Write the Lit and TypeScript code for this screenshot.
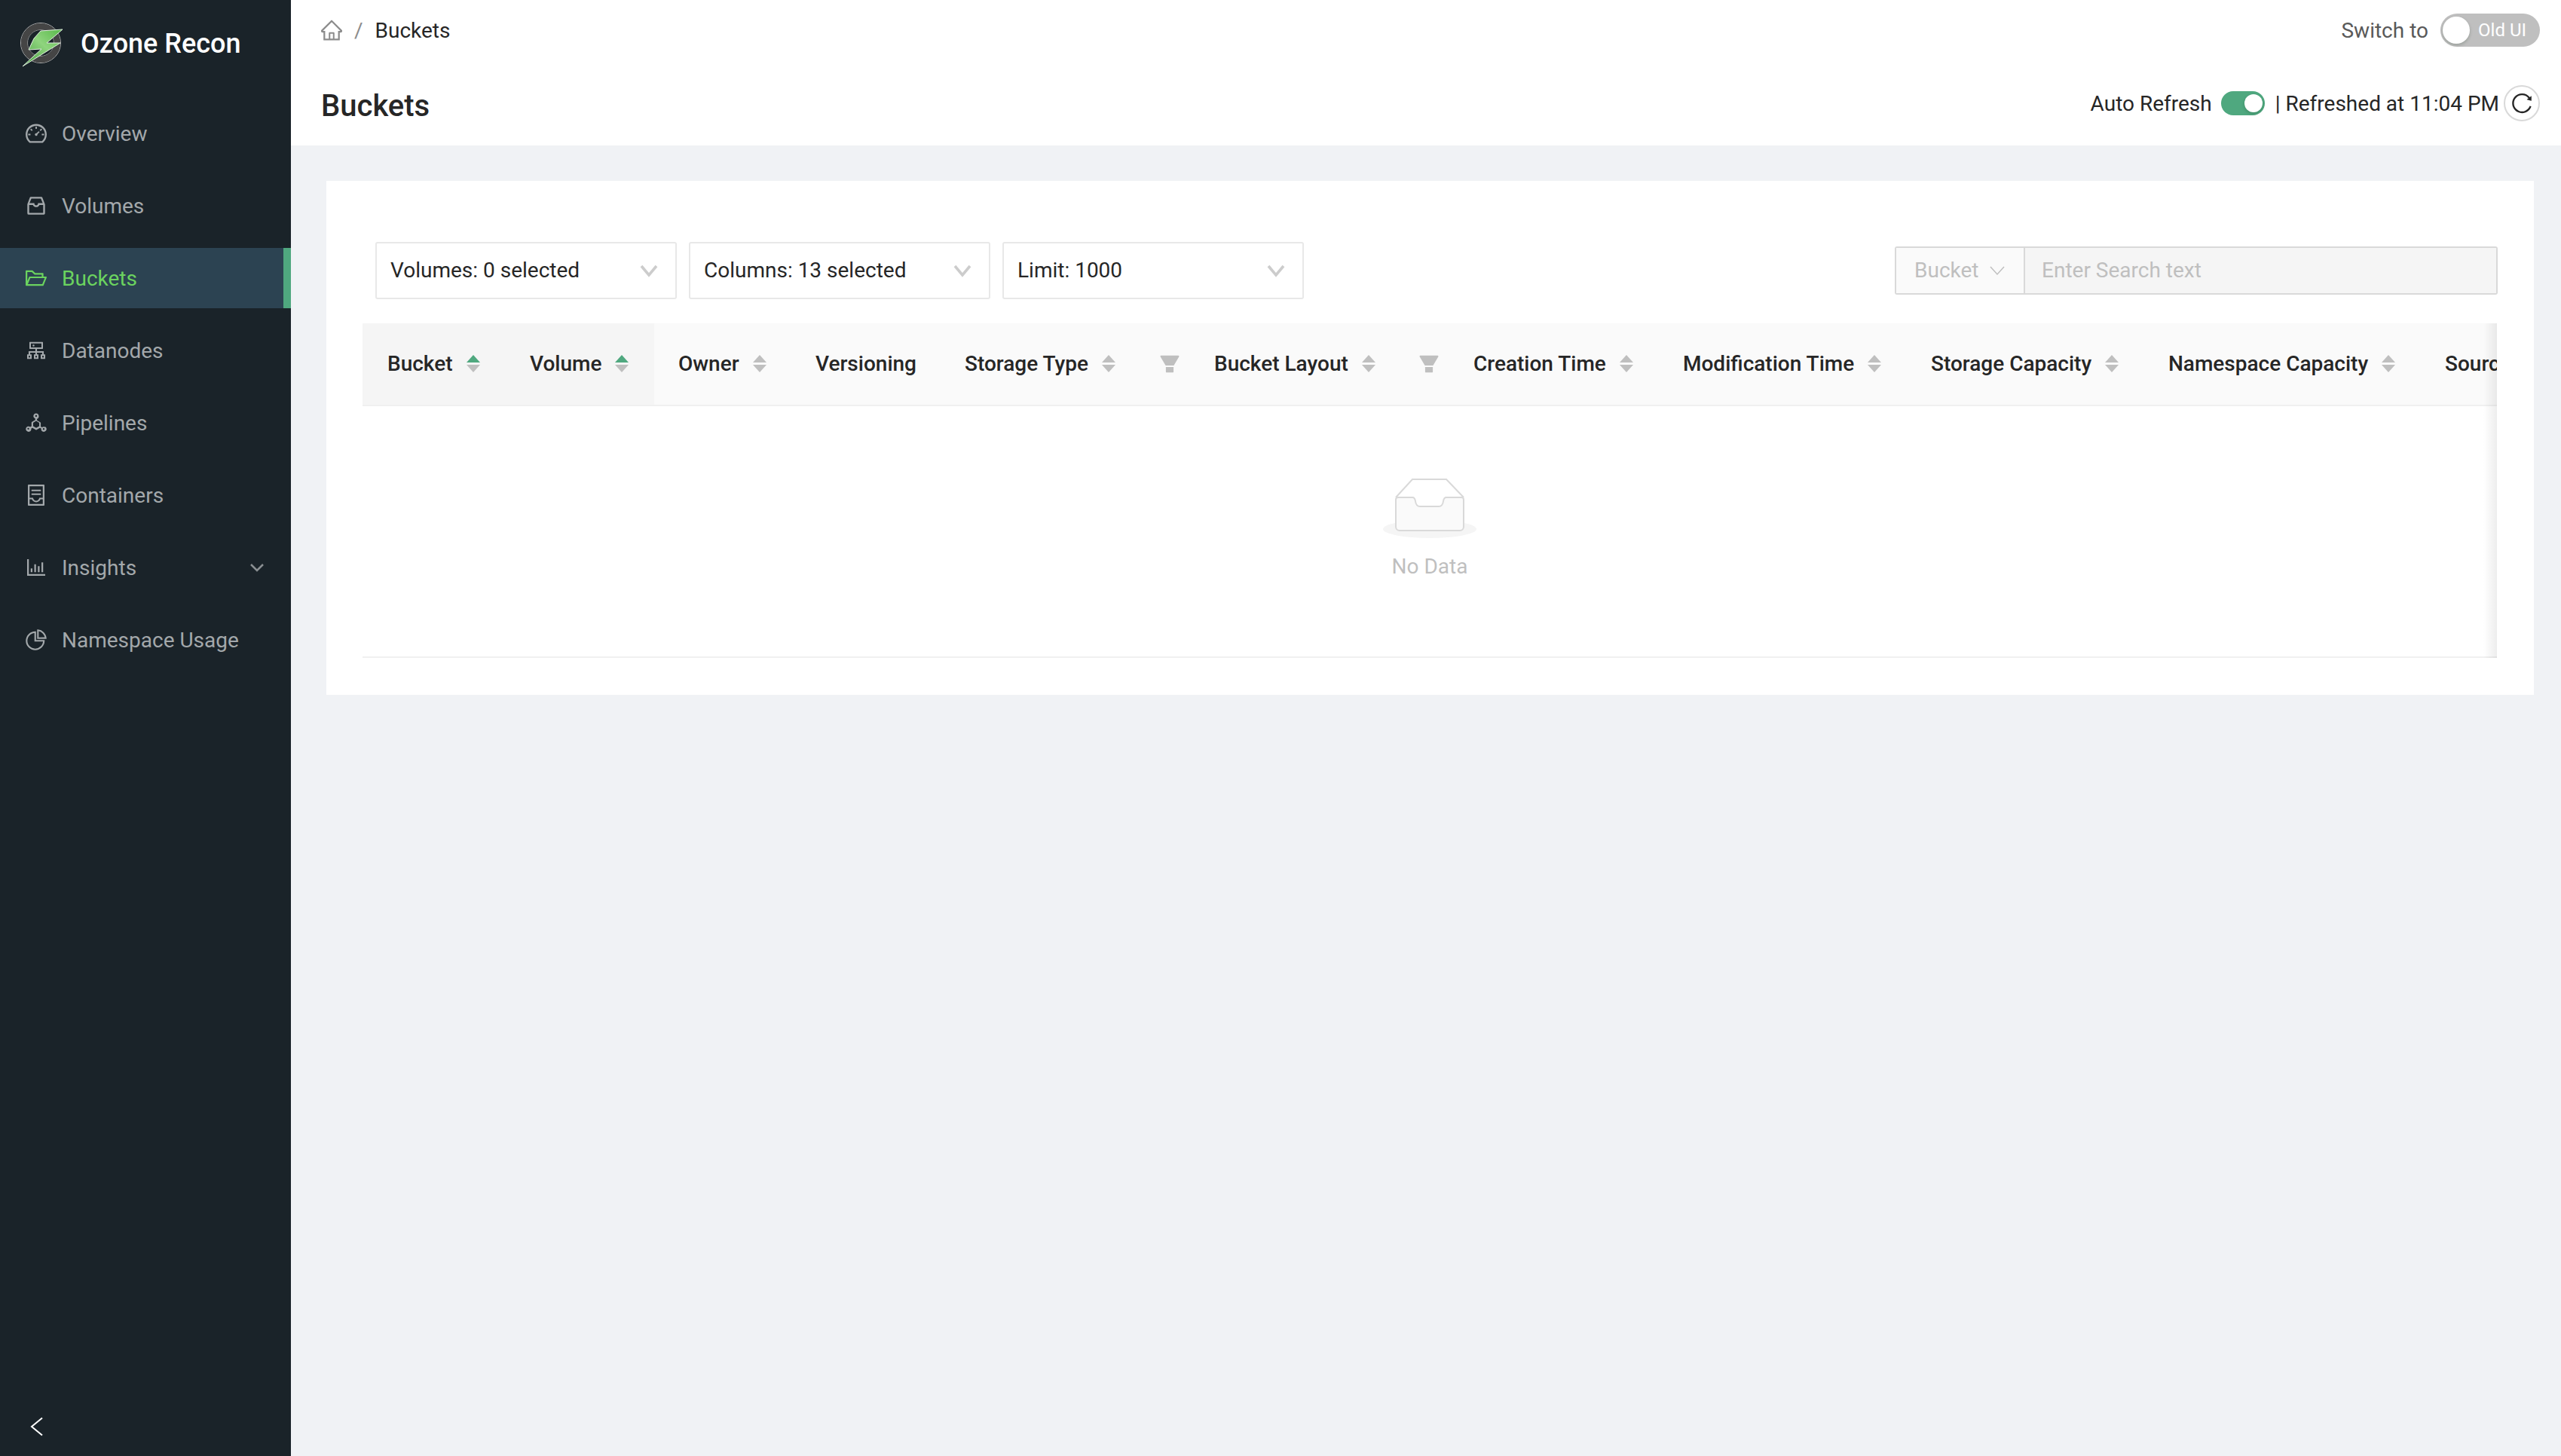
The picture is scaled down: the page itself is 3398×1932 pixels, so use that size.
import { LitElement, html, css, svg } from "lit";
import { customElement } from "lit/decorators.js";

const A = "64 64 896 896";
const ic = (d: string) => html`<svg class="ic" viewBox=${A} fill="currentColor"><path d=${d}></path></svg>`;

const P = {
  dashboard: "M924.800 385.600a446.700 446.700 0 0 0-96-142.400 446.700 446.700 0 0 0-142.400-96C631.100 123.800 572.500 112 512 112s-119.100 11.800-174.400 35.200a446.700 446.700 0 0 0-142.400 96 446.700 446.700 0 0 0-96 142.400C75.800 440.900 64 499.500 64 560c0 132.700 58.300 257.700 159.900 343.100l1.700 1.400c5.800 4.800 13.100 7.500 20.600 7.500h531.700c7.500 0 14.800-2.700 20.600-7.500l1.700-1.400C901.700 817.700 960 692.700 960 560c0-60.500-11.900-119.100-35.200-174.400zM761.400 836H262.600A371.120 371.120 0 0 1 140 560c0-99.400 38.700-192.800 109-263 70.300-70.300 163.700-109 263-109 99.400 0 192.800 38.700 263 109 70.300 70.300 109 163.700 109 263 0 105.600-44.500 205.500-122.600 276zM623.500 421.500a8.030 8.030 0 0 0-11.300 0L527.700 506c-18.700-5-39.400-.2-54.100 14.500a55.950 55.950 0 0 0 0 79.200 55.950 55.950 0 0 0 79.200 0 55.870 55.870 0 0 0 14.500-54.100l84.500-84.500c3.100-3.100 3.100-8.200 0-11.300l-28.300-28.300zM490 320h44c4.400 0 8-3.600 8-8v-80c0-4.400-3.600-8-8-8h-44c-4.400 0-8 3.600-8 8v80c0 4.400 3.600 8 8 8zm260 218v44c0 4.400 3.600 8 8 8h80c4.400 0 8-3.600 8-8v-44c0-4.400-3.600-8-8-8h-80c-4.400 0-8 3.600-8 8zm12.700-197.200l-31.100-31.100a8.030 8.030 0 0 0-11.300 0l-56.600 56.600a8.030 8.030 0 0 0 0 11.300l31.100 31.100c3.100 3.100 8.200 3.100 11.300 0l56.600-56.600c3.100-3.100 3.100-8.200 0-11.300zm-458.600-31.100a8.030 8.030 0 0 0-11.300 0l-31.100 31.100a8.030 8.030 0 0 0 0 11.300l56.600 56.600c3.100 3.100 8.200 3.100 11.300 0l31.100-31.100c3.100-3.100 3.100-8.200 0-11.300l-56.600-56.600zM262 530h-80c-4.400 0-8 3.600-8 8v44c0 4.400 3.600 8 8 8h80c4.400 0 8-3.600 8-8v-44c0-4.400-3.600-8-8-8z",
  inbox: "M885.200 446.300l-.2-.8-112.200-285.100c-5-16.100-19.900-27.200-36.800-27.200H281.200c-17 0-32.100 11.300-36.900 27.600L139.400 443l-.3.700-.2.800c-1.300 4.900-1.700 9.900-1 14.800-.1 1.600-.2 3.200-.2 4.800V830a60.900 60.900 0 0 0 60.800 60.800h627.200c33.500 0 60.800-27.300 60.900-60.800V464.100c0-1.300 0-2.600-.1-3.700.4-4.900 0-9.600-1.300-14.100zm-295.800-43l-.3 15.700c-.8 44.900-31.800 75.100-77.100 75.100-22.100 0-41.100-7.100-54.800-20.600S436 441.200 435.600 419l-.3-15.700H229.500L309 210h399.200l81.700 193.300H589.400zm-375 76.800h157.300c24.300 57.100 76 90.800 140.400 90.800 33.700 0 65-9.400 90.300-27.200 22.200-15.600 39.500-37.400 50.700-63.600h156.500V814H214.400V480.100z",
  folder: "M928 444H820V330.400c0-17.700-14.300-32-32-32H473L355.700 186.200a8.150 8.150 0 0 0-5.500-2.200H96c-17.700 0-32 14.300-32 32v592c0 17.700 14.300 32 32 32h698c13 0 24.800-7.900 29.700-20l134-332c1.500-3.800 2.300-7.900 2.300-12 0-17.700-14.300-32-32-32zM136 256h188.500l119.600 114.400H748V444H238c-13 0-24.800 7.900-29.700 20L136 643.200V256zm635.300 512H159l103.300-256h612.400L771.300 768z",
  cluster: "M888 680h-54V540H546v-92h238c8.800 0 16-7.200 16-16V168c0-8.800-7.200-16-16-16H240c-8.800 0-16 7.200-16 16v264c0 8.800 7.200 16 16 16h238v92H190v140h-54c-4.400 0-8 3.600-8 8v176c0 4.400 3.600 8 8 8h176c4.400 0 8-3.600 8-8V688c0-4.400-3.600-8-8-8h-54v-72h220v72h-54c-4.400 0-8 3.600-8 8v176c0 4.400 3.600 8 8 8h176c4.400 0 8-3.600 8-8V688c0-4.400-3.600-8-8-8h-54v-72h220v72h-54c-4.400 0-8 3.600-8 8v176c0 4.400 3.600 8 8 8h176c4.400 0 8-3.600 8-8V688c0-4.400-3.600-8-8-8zM256 805.300c0 1.500-1.200 2.700-2.700 2.700h-58.700c-1.500 0-2.700-1.200-2.700-2.700v-58.700c0-1.500 1.200-2.700 2.700-2.700h58.700c1.500 0 2.700 1.200 2.700 2.700v58.700zm288 0c0 1.500-1.200 2.700-2.700 2.700h-58.700c-1.500 0-2.700-1.200-2.700-2.700v-58.700c0-1.500 1.200-2.700 2.700-2.700h58.700c1.500 0 2.700 1.200 2.700 2.700v58.700zM288 384V216h448v168H288zm544 421.300c0 1.500-1.200 2.700-2.700 2.700h-58.700c-1.500 0-2.700-1.200-2.700-2.700v-58.700c0-1.500 1.200-2.700 2.700-2.700h58.700c1.500 0 2.700 1.200 2.700 2.700v58.700zM360 300a40 40 0 1 0 80 0 40 40 0 1 0-80 0z",
  deploy: "M888.300 693.200c-42.500-24.600-94.300-18-129.200 12.800l-53-30.700V523.600c0-15.700-8.400-30.300-22-38.100l-136.900-79.100v-61.100c45.400-14.800 78.400-57.500 78.400-108C626 159.900 574 108 510 108s-116 51.900-116 116c0 50.500 32.900 93.200 78.400 108v60.800L335.300 470c-13.600 7.800-22 22.400-22 38.100v151.700L260.200 690c-34.800-30.800-86.500-37.300-129-12.800-55.500 32-74.500 103-42.400 158.500 32.100 55.500 103 74.500 158.500 42.400 42.500-24.500 62.300-72.700 52.600-118.200L353 729l136.800 79c6.800 3.900 14.300 5.900 21.900 5.900 7.500 0 15.100-2 21.900-5.900L672.700 729l53.100 30.700c-9.700 45.600 10 93.800 52.600 118.200 55.500 32 126.400 13 158.500-42.400 31.800-55.500 12.800-126.400-42.600-158.300zM158 795.600c-17.500-10-23.500-32.500-13.400-50 10-17.500 32.500-23.500 50-13.400 17.500 10 23.500 32.500 13.400 50-10 17.500-32.500 23.500-50 13.400zM471 224c0-21.500 17.500-39 39-39s39 17.500 39 39-17.500 39-39 39-39-17.500-39-39zm169.700 432.900L512 731.200 383.300 656.900V508.300L512 434l128.700 74.300v148.600zm221.800 137.200c-10.100 17.500-32.500 23.500-50 13.400-17.500-10-23.500-32.500-13.400-50 10-17.500 32.500-23.500 50-13.400 17.500 10 23.500 32.400 13.400 50z",
  container: "M832 64H192c-17.700 0-32 14.300-32 32v832c0 17.700 14.300 32 32 32h640c17.700 0 32-14.300 32-32V96c0-17.700-14.300-32-32-32zm-40 824H232V687h97.900c11.600 32.800 32 62.300 59.100 84.700 34.500 28.500 78.200 44.300 123 44.300s88.500-15.700 123-44.300c27.100-22.400 47.500-51.900 59.100-84.700H792v201zm0-264H643.600l-5.200 24.700C626.400 708.500 573.200 752 512 752s-114.400-43.500-126.500-103.300l-5.200-24.700H232V136h560v488zM320 341h384c4.400 0 8-3.600 8-8v-48c0-4.400-3.600-8-8-8H320c-4.400 0-8 3.600-8 8v48c0 4.400 3.600 8 8 8zm0 160h384c4.400 0 8-3.600 8-8v-48c0-4.400-3.600-8-8-8H320c-4.400 0-8 3.600-8 8v48c0 4.400 3.600 8 8 8z",
  bar: "M888 792H200V168c0-4.400-3.600-8-8-8h-56c-4.400 0-8 3.600-8 8v688c0 4.400 3.600 8 8 8h752c4.400 0 8-3.600 8-8v-56c0-4.400-3.600-8-8-8zm-600-80h56c4.400 0 8-3.600 8-8V560c0-4.400-3.600-8-8-8h-56c-4.400 0-8 3.600-8 8v144c0 4.400 3.600 8 8 8zm152 0h56c4.400 0 8-3.600 8-8V384c0-4.400-3.600-8-8-8h-56c-4.400 0-8 3.600-8 8v320c0 4.400 3.600 8 8 8zm152 0h56c4.400 0 8-3.600 8-8V462c0-4.400-3.600-8-8-8h-56c-4.400 0-8 3.600-8 8v242c0 4.400 3.600 8 8 8zm152 0h56c4.400 0 8-3.600 8-8V304c0-4.400-3.600-8-8-8h-56c-4.400 0-8 3.600-8 8v400c0 4.400 3.600 8 8 8z",
  pie: "M864 518H506V160c0-4.400-3.600-8-8-8h-26a398.460 398.460 0 0 0-282.800 117.100 398.190 398.190 0 0 0-85.700 127.100A397.610 397.610 0 0 0 72 552a398.460 398.460 0 0 0 117.100 282.800c36.700 36.700 79.500 65.600 127.100 85.700A397.610 397.610 0 0 0 472 952a398.460 398.460 0 0 0 282.800-117.100c36.700-36.700 65.600-79.500 85.700-127.100A397.610 397.610 0 0 0 872 552v-26c0-4.400-3.600-8-8-8zM705.700 787.800A331.590 331.590 0 0 1 470.400 884c-88.100-.4-170.900-34.900-233.200-97.200C174.500 724.100 140 640.700 140 552c0-88.700 34.500-172.100 97.200-234.800 54.600-54.600 124.900-87.900 200.800-95.500V586h364.300c-7.700 76.300-41.300 147-96.600 201.800zM952 462.400l-2.600-28.200c-8.500-92.100-49.400-179-115.200-244.600A399.400 399.400 0 0 0 589 74.600L560.700 72c-4.700-.4-8.700 3.200-8.700 7.900V464c0 4.400 3.600 8 8 8l384-1c4.700 0 8.400-4 8-8.600zm-332.200-58.200V147.600a332.240 332.240 0 0 1 166.400 89.800c45.700 45.600 77 103.600 90 166.100l-256.400.7z",
  home: "M946.500 505L560.100 118.800l-25.900-25.900a31.500 31.500 0 0 0-44.400 0L77.500 505a63.900 63.900 0 0 0-18.800 46c.4 35.200 29.700 63.300 64.900 63.300h42.500V940h691.800V614.300h43.400c17.100 0 33.200-6.700 45.300-18.800a63.600 63.600 0 0 0 18.700-45.300c0-17-6.700-33.100-18.800-45.200zM568 868H456V664h112v204zm217.900-325.700V868H632V640c0-22.100-17.900-40-40-40H432c-22.100 0-40 17.900-40 40v228H238.100V542.300h-96l370-369.700 23.100 23.100L882 542.300h-96.100z",
  reload: "M909.100 209.300l-56.400 44.100C775.800 155.100 656.200 92 521.900 92 290 92 102.300 279.500 102 511.500 101.700 743.700 289.800 932 521.900 932c181.300 0 335.800-115 394.600-276.100 1.500-4.200-.7-8.900-4.900-10.300l-56.700-19.500a8 8 0 0 0-10.100 4.800c-1.800 5-3.800 10-5.900 14.900-17.300 41-42.100 77.800-73.700 109.400A344.770 344.770 0 0 1 655.900 829c-42.300 17.900-87.400 27-133.800 27-46.500 0-91.500-9.100-133.800-27A341.500 341.500 0 0 1 279 755.200a342.160 342.160 0 0 1-73.700-109.400c-17.900-42.400-27-87.400-27-133.900s9.100-91.500 27-133.900c17.300-41 42.100-77.800 73.700-109.400 31.600-31.600 68.400-56.400 109.300-73.800 42.300-17.900 87.400-27 133.800-27 46.500 0 91.500 9.100 133.800 27a341.500 341.500 0 0 1 109.300 73.800c9.900 9.900 19.200 20.400 27.800 31.400l-60.200 47a8 8 0 0 0 3 14.100l175.600 43c5 1.200 9.900-2.600 9.900-7.700l.8-180.900c-.1-6.600-7.800-10.300-13-6.200z",
  filter: "M349 838c0 17.700 14.200 32 31.800 32h262.400c17.600 0 31.800-14.300 31.800-32V642H349v196zm531.100-684H143.900c-24.500 0-39.800 26.700-27.500 48l221.300 376h348.800l221.300-376c12.100-21.300-3.200-48-27.700-48z",
};

const navItems: { label: string; icon: string; active?: boolean; caret?: boolean }[] = [
  { label: "Overview", icon: P.dashboard },
  { label: "Volumes", icon: P.inbox },
  { label: "Buckets", active: true, icon: P.folder },
  { label: "Datanodes", icon: P.cluster },
  { label: "Pipelines", icon: P.deploy },
  { label: "Containers", icon: P.container },
  { label: "Insights", caret: true, icon: P.bar },
  { label: "Namespace Usage", icon: P.pie },
];

const columns: { label: string; w: number; sort?: "asc" | "none"; filter?: boolean; fixed?: boolean; noSort?: boolean }[] = [
  { label: "Bucket", w: 189, sort: "asc", fixed: true },
  { label: "Volume", w: 198, sort: "asc", fixed: true },
  { label: "Owner", w: 182, sort: "none" },
  { label: "Versioning", w: 198, noSort: true },
  { label: "Storage Type", w: 331, sort: "none", filter: true },
  { label: "Bucket Layout", w: 344, sort: "none", filter: true },
  { label: "Creation Time", w: 278, sort: "none" },
  { label: "Modification Time", w: 329, sort: "none" },
  { label: "Storage Capacity", w: 315, sort: "none" },
  { label: "Namespace Capacity", w: 367, sort: "none" },
  { label: "Source Volume", w: 300, noSort: true },
];

@customElement("app-root")
export class AppRoot extends LitElement {
  static styles = css`
    :host { display: block; width: 3398px; height: 1932px; font-family: Roboto, "Liberation Sans", sans-serif; font-size: 28px; color: #262626; background: #f0f2f5; overflow: hidden; }
    * { box-sizing: border-box; }
    .layout { display: flex; height: 1932px; }
    .side { width: 386px; flex: none; background: #1a2329; display: flex; flex-direction: column; color: #a3a8ab; }
    .brand { height: 115px; display: flex; align-items: center; padding-left: 26px; gap: 20px; color: #fff; font-size: 36px; font-weight: 500; flex: none; }
    .brand svg { width: 61px; height: 62px; flex: none; margin-top: 3px; }
    .menu { flex: 1; display: flex; flex-direction: column; padding-top: 22px; }
    .item { height: 80px; margin-bottom: 16px; display: flex; align-items: center; padding-left: 34px; gap: 20px; position: relative; flex: none; }
    .item.active { background: #2c4352; color: #6bd35f; }
    .item.active::after { content: ""; position: absolute; right: 0; top: 0; bottom: 0; width: 10px; background: #4fa87f; }
    .ic { width: 28px; height: 28px; flex: none; }
    .caret { margin-left: auto; margin-right: 36px; width: 18px; height: 18px; color: #8a8f92; }
    .collapse { height: 132px; flex: none; display: flex; align-items: center; padding: 0 0 0 39px; color: #fff; }
    .collapse svg { width: 22px; height: 26px; margin-top: 54px; }
    .main { flex: 1; display: flex; flex-direction: column; min-width: 0; }
    .head { height: 193px; flex: none; background: #fff; display: flex; flex-direction: column; padding: 0 28px 0 40px; }
    .row1 { height: 80px; display: flex; align-items: center; flex: none; }
    .crumb { display: flex; align-items: center; color: #262626; }
    .crumb svg { width: 28px; height: 28px; color: #8c8c8c; }
    .slash { color: #8c8c8c; margin: 0 16px; }
    .switch { margin-left: auto; display: flex; align-items: center; gap: 16px; color: #595959; }
    .old { width: 132px; height: 44px; border-radius: 22px; background: #bfbfbf; position: relative; color: #fff; font-size: 24px; display: flex; align-items: center; justify-content: flex-end; padding-right: 18px; }
    .knob { position: absolute; background: #fff; border-radius: 50%; box-shadow: 0 2px 4px rgba(0,35,11,.2); }
    .old .knob { left: 3px; top: 4px; width: 36px; height: 36px; }
    .row2 { height: 80px; display: flex; align-items: center; margin-top: 20px; flex: none; }
    h1 { margin: 0; font-size: 40px; font-weight: 500; color: #262626; }
    .refresh { margin-left: auto; display: flex; align-items: center; margin-top: -6px; }
    .auto { width: 58px; height: 32px; border-radius: 16px; background: #4fa87f; position: relative; margin: 0 14px 0 12px; }
    .auto .knob { right: 3px; top: 4px; width: 24px; height: 24px; }
    .rbtn { width: 48px; height: 48px; border-radius: 50%; border: 2px solid #d9d9d9; background: #fff; display: flex; align-items: center; justify-content: center; margin-left: 6px; }
    .rbtn svg { width: 28px; height: 28px; }
    .content { padding: 47px 36px 0 47px; flex: 1; }
    .card { background: #fff; height: 682px; padding: 81px 48px 0 48px; }
    .filters { display: flex; align-items: center; height: 75px; padding-left: 17px; gap: 16px; }
    .sel { width: 400px; height: 76px; border: 2px solid #e8e8e8; border-radius: 3px; display: flex; align-items: center; padding: 0 22px 0 18px; justify-content: space-between; color: #262626; }
    .sel svg { width: 26px; height: 26px; color: #cccccc; }
    .search { margin-left: auto; width: 800px; height: 64px; display: flex; border: 2px solid #d9d9d9; border-radius: 3px; color: #bfbfbf; }
    .sb { width: 171px; flex: none; background: #fafafa; border-right: 2px solid #d9d9d9; display: flex; align-items: center; padding-left: 24px; gap: 14px; }
    .sb svg { width: 22px; height: 22px; }
    .si { flex: 1; background: #f5f5f5; display: flex; align-items: center; padding-left: 22px; }
    .tablewrap { margin-top: 33px; height: 444px; overflow: hidden; position: relative; width: 2832px; }
    .tablewrap::after { content: ""; position: absolute; right: 0; top: 0; bottom: 0; width: 18px; pointer-events: none; background: linear-gradient(90deg, rgba(0,0,0,0), rgba(0,0,0,.07)); }
    .clip { overflow: hidden; height: 444px; }
    .thead { display: flex; width: max-content; height: 110px; background: #fafafa; border-bottom: 2px solid #f0f0f0; font-weight: 500; }
    .th { flex: none; display: flex; align-items: center; padding-left: 32px; position: relative; white-space: nowrap; padding-bottom: 2px; }
    .th.fixed { background: #f5f5f5; padding-left: 33px; }
    .sort { display: inline-flex; flex-direction: column; gap: 3px; margin-left: 18px; flex: none; }
    .sort i { display: block; width: 0; height: 0; border-left: 9px solid transparent; border-right: 9px solid transparent; }
    .up { border-bottom: 10px solid #bfbfbf; }
    .up.on { border-bottom-color: #4fa87f; }
    .down { border-top: 10px solid #bfbfbf; }
    .funnel { position: absolute; right: 0; top: 0; bottom: 0; width: 54px; display: flex; align-items: center; justify-content: center; color: #bfbfbf; }
    .funnel svg { width: 28px; height: 28px; }
    .empty { height: 334px; border-bottom: 2px solid #f0f0f0; display: flex; flex-direction: column; align-items: center; padding-top: 96px; color: #bfbfbf; }
    .empty svg { width: 124px; height: 80px; display: block; }
    .empty span { margin-top: 20px; }
  `;

  render() {
    return html`<div class="layout">
      <aside class="side">
        <div class="brand">
          <svg viewBox="26 28 61 62">
            <defs><linearGradient id="g" x1="0" y1="1" x2="1" y2="0"><stop offset="0" stop-color="#3f9a3a"/><stop offset=".55" stop-color="#8fd47e"/><stop offset="1" stop-color="#56b848"/></linearGradient></defs>
            <circle cx="54" cy="57" r="26.500" fill="none" stroke="#b0b0b0" stroke-width="1"/>
            <circle cx="54" cy="57" r="22" fill="none" stroke="#454545" stroke-width="8"/>
            <circle cx="54" cy="57" r="17.500" fill="none" stroke="#8a8a8a" stroke-width="1"/>
            ${svg`<path d="M55 41 L84 39 L63 57 L81 57 L31 88 L56 65 L39 66 L46 51 Z" transform="translate(-1 0)" fill="url(#g)" stroke="#dfeedd" stroke-width="1"/>`}
          </svg>
          Ozone Recon
        </div>
        <nav class="menu">
          ${navItems.map((n) => html`<div class="item ${n.active ? "active" : ""}">${ic(n.icon)}<span>${n.label}</span>${n.caret ? html`<svg class="caret" viewBox="0 0 18 18" fill="none" stroke="currentColor" stroke-width="2.500"><path d="M1 5l8 8 8-8"/></svg>` : ""}</div>`)}
        </nav>
        <div class="collapse"><svg viewBox="0 0 22 26" fill="none" stroke="currentColor" stroke-width="2"><path d="M17 1.500L3 13l14 11.500"/></svg></div>
      </aside>
      <main class="main">
        <header class="head">
          <div class="row1">
            <div class="crumb">
              <svg viewBox=${A} fill="currentColor"><path d=${P.home}></path></svg>
              <span class="slash">/</span><span>Buckets</span>
            </div>
            <div class="switch">Switch to <div class="old"><span class="knob"></span>Old UI</div></div>
          </div>
          <div class="row2">
            <h1>Buckets</h1>
            <div class="refresh">Auto Refresh<div class="auto"><span class="knob"></span></div>| Refreshed at 11:04 PM
              <div class="rbtn"><svg viewBox=${A} fill="#262626"><path d=${P.reload}></path></svg></div>
            </div>
          </div>
        </header>
        <div class="content">
          <section class="card">
            <div class="filters">
              ${["Volumes: 0 selected", "Columns: 13 selected", "Limit: 1000"].map((s) => html`<div class="sel"><span>${s}</span><svg viewBox="0 0 26 26" fill="none" stroke="currentColor" stroke-width="3.600"><path d="M3 7l10 12L23 7"/></svg></div>`)}
              <div class="search">
                <div class="sb">Bucket <svg viewBox="0 0 22 22" fill="none" stroke="currentColor" stroke-width="1.500"><path d="M2 6l9 10 9-10"/></svg></div>
                <div class="si">Enter Search text</div>
              </div>
            </div>
            <div class="tablewrap">
              <div class="clip">
                <div class="thead">
                  ${columns.map((c) => html`<div class="th ${c.fixed ? "fixed" : ""}" style="width:${c.w}px">${c.label}${c.noSort ? "" : html`<span class="sort"><i class="up ${c.sort === "asc" ? "on" : ""}"></i><i class="down"></i></span>`}${c.filter ? html`<span class="funnel"><svg viewBox=${A} fill="currentColor"><path d=${P.filter}></path></svg></span>` : ""}</div>`)}
                </div>
                <div class="empty">
                  <svg viewBox="0 0 124 80" fill="none">
                    <ellipse cx="62" cy="67" rx="62" ry="12" fill="#f5f5f5"/>
                    <path d="M17 25L39 1h45l23 24" fill="#fff" stroke="#d9d9d9" stroke-width="2"/>
                    <path d="M17 28a3 3 0 0 1 3-3h19c3 0 3.500 2 4 5 .5 4 2.500 7 6 7h25c3.500 0 5.500-3 6-7 .5-3 1-5 4-5h20a3 3 0 0 1 3 3v36a5 5 0 0 1-5 5H22a5 5 0 0 1-5-5z" fill="#fafafa" stroke="#d9d9d9" stroke-width="2"/>
                  </svg>
                  <span>No Data</span>
                </div>
              </div>
            </div>
          </section>
        </div>
      </main>
    </div>`;
  }
}
